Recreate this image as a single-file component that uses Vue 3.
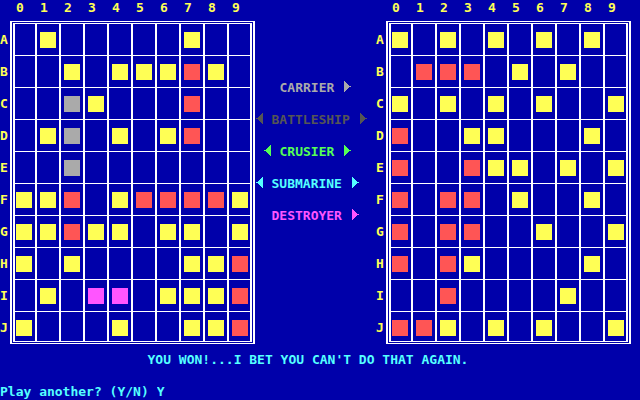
<script setup>
import { ref } from 'vue'

const columns = [0, 1, 2, 3, 4, 5, 6, 7, 8, 9]
const letters = 'ABCDEFGHIJ'

// y = miss, r = hit, g = carrier, m = destroyer, . = open water
const boards = [
  {
    name: 'Your fleet',
    rows: [
      '.y.....y..',
      '..y.yyyry.',
      '..gy...r..',
      '.yg.y.yr..',
      '..g.......',
      'yyr.yrrrry',
      'yyryy.yy.y',
      'y.y....yyr',
      '.y.mm.yyyr',
      'y...y..yyr',
    ],
  },
  {
    name: 'Enemy waters',
    rows: [
      'y.y.y.y.y.',
      '.rrr.y.y..',
      'y.y.y.y..y',
      'r..yy...y.',
      'r..ryy.y.y',
      'r.rr.y..y.',
      'r.rr..y..y',
      'r.ry....y.',
      '..r....y..',
      'rry.y.y..y',
    ],
  },
]

const ships = [
  { name: 'CARRIER', left: false },
  { name: 'BATTLESHIP', left: true },
  { name: 'CRUSIER', left: true },
  { name: 'SUBMARINE', left: true },
  { name: 'DESTROYER', left: false },
]

const indent = (name) => Math.max(0, Math.floor((9 - name.length) / 2)) * 8
const answer = ref('Y')
</script>

<template>
  <main class="screen">
    <div class="field">
      <table v-for="(board, b) in boards" :key="board.name" class="board" :class="{ second: b === 1 }" :aria-label="board.name">
        <thead>
          <tr>
            <td></td>
            <th v-for="c in columns" :key="c" scope="col">{{ c }}</th>
          </tr>
        </thead>
        <tbody>
          <tr v-for="(row, i) in board.rows" :key="i">
            <th scope="row">{{ letters[i] }}</th>
            <td v-for="(mark, c) in row" :key="c"><i v-if="mark !== '.'" :class="['peg', mark]"></i></td>
          </tr>
        </tbody>
      </table>

      <ul class="ships">
        <li v-for="ship in ships" :key="ship.name" :class="ship.name.toLowerCase()" :style="{ paddingLeft: indent(ship.name) + 'px' }">
          <svg class="arrow" :class="{ off: !ship.left }" viewBox="0 0 8 16" aria-hidden="true">
            <path d="M7 1h-1v1h-1v1h-1v1h-1v1h-1v1h-2v1h2v1h1v1h1v1h1v1h1v1h1z" />
          </svg>
          <span :style="{ width: ship.name.length * 8 + 'px' }">{{ ship.name }}</span>
          <svg class="arrow" viewBox="0 0 8 16" aria-hidden="true">
            <path d="M0 1h1v1h1v1h1v1h1v1h1v1h2v1h-2v1h-1v1h-1v1h-1v1h-1v1h-1z" />
          </svg>
        </li>
      </ul>
    </div>

    <p class="message">YOU WON!...I BET YOU CAN'T DO THAT AGAIN.</p>

    <form class="prompt" @submit.prevent>
      <label for="again">Play another? (Y/N)</label>
      <input id="again" v-model="answer" maxlength="1" autocomplete="off" />
    </form>
  </main>
</template>

<style>
body {
  margin: 0;
  background: #0000aa;
}
</style>

<style scoped>
.screen {
  background: #0000aa;
  color: #55ffff;
  font: bold 13px/16px 'DejaVu Sans Mono', 'Liberation Mono', monospace;
}

.field {
  display: flex;
  justify-content: space-between;
  padding-right: 9px;
}

.board {
  position: relative;
  flex: none;
  box-sizing: border-box;
  border-collapse: separate;
  border-spacing: 0;
  table-layout: fixed;
  width: 255px;
  padding: 0 3px 2px 0;
  color: #ffff55;
}

.board.second {
  order: 2;
}

/* outer line of the double frame */
.board::after {
  content: '';
  position: absolute;
  inset: 21px 0 0 10px;
  border: solid #ffffff;
  border-width: 1px 2px;
}

.board th,
.board td {
  box-sizing: border-box;
  padding: 0;
  font-weight: bold;
  text-align: left;
  vertical-align: top;
}

.board thead td {
  width: 13px;
}

.board thead th {
  width: 24px;
  height: 23px;
  padding-left: 5px;
}

.board thead td + th {
  width: 22px;
  padding-left: 3px;
}

.board thead th:last-child {
  width: 25px;
}

.board tbody th,
.board tbody td {
  height: 32px;
}

.board tbody th {
  padding-top: 9px;
}

.board tbody td {
  padding: 8px 0 0 3px;
  border-top: 1px solid #ffffff;
  border-left: 2px solid #ffffff;
}

.board tbody th + td {
  padding-left: 1px;
}

.board tbody td:last-child {
  border-right: 2px solid #ffffff;
}

.board tbody tr:last-child th,
.board tbody tr:last-child td {
  height: 31px;
}

.board tbody tr:last-child td {
  border-bottom: 1px solid #ffffff;
}

.peg {
  display: block;
  width: 16px;
  height: 16px;
}

.y { background: #ffff55; }
.r { background: #ff5555; }
.g { background: #aaaaaa; }
.m { background: #ff55ff; }

.ships {
  order: 1;
  display: flex;
  flex-direction: column;
  gap: 16px;
  margin: 0 8px 0 0;
  padding: 80px 0 0;
  list-style: none;
}

.ships li {
  display: flex;
  gap: 8px;
}

.arrow {
  flex: none;
  width: 8px;
  height: 16px;
  fill: currentColor;
  shape-rendering: crispEdges;
}

.off {
  visibility: hidden;
}

.carrier { color: #aaaaaa; }
.battleship { color: #555555; }
.crusier { color: #55ff55; }
.submarine { color: #55ffff; }
.destroyer { color: #ff55ff; }

.message {
  margin: 8px 24px 0 0;
  text-align: center;
}

.prompt {
  display: flex;
  gap: 8px;
  margin: 16px 0 0;
}

.prompt input {
  width: 16px;
  height: 16px;
  padding: 0;
  border: 0;
  outline: 0;
  background: transparent;
  color: inherit;
  font: inherit;
}
</style>
